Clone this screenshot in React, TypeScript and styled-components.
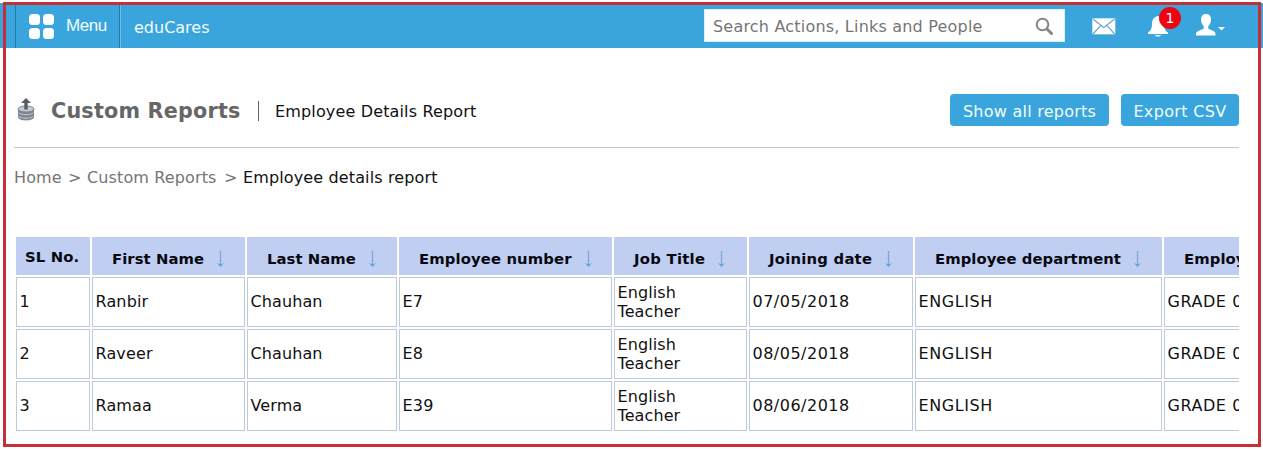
import React from "react";
import styled, { createGlobalStyle } from "styled-components";

const Global = createGlobalStyle`
  * { box-sizing: border-box; }
  body { margin: 0; background: #fff; color: #111; font: 16px/19px Verdana, "DejaVu Sans", sans-serif; overflow: hidden; }
`;
const Page = styled.div`position: relative; width: 1263px; height: 450px; padding-top: 3px; overflow: hidden; background: #fefefe;`;
const Frame = styled.div`position: absolute; left: 3px; top: 2px; width: 1258px; height: 445px; border: 3px solid #c62f38; pointer-events: none;`;
const Bar = styled.header`display: flex; height: 45px; background: #3aa5dc; color: #f2fcff; padding-left: 15px;`;
const MenuButton = styled.div`
  display: flex; align-items: center; width: 105px; padding: 1px 0 0 13px; gap: 12px;
  border-left: 1px solid #2379a8; border-right: 1px solid #2379a8;
  font: 17px/20px "Liberation Sans", Arial, sans-serif;
`;
const Brand = styled.div`padding: 15px 0 0 13px; width: 584px; border-left: 1px solid #6bbfe8;`;
const Search = styled.div`
  display: flex; align-items: center; justify-content: space-between; width: 361px; height: 33px; margin-top: 6px;
  padding: 1px 10px 0 8px; background: #fff; color: #757575; border: 1px solid #d8eef8;
`;
const Tools = styled.div`display: flex; align-items: flex-start; padding-left: 27px;`;
const Tool = styled.div<{ $w: number; $top: number }>`position: relative; width: ${p => p.$w}px; padding-top: ${p => p.$top}px; svg { display: block; }`;
const Badge = styled.span`
  position: absolute; left: 11px; top: 4px; width: 22px; height: 22px; border-radius: 50%; background: #f00410; color: #fff;
  font-size: 14px; line-height: 22px; text-align: center;
`;
const Content = styled.main`width: 1225px; margin-left: 14px;`;
const TitleRow = styled.div`display: flex; align-items: center; height: 100px; padding-top: 25px; border-bottom: 1px solid #c8c8c8;`;
const DatabaseMark = styled.span`display: flex; padding-left: 3px; width: 23px; margin-top: -1px;`;
const Title = styled.h1`margin: 1px 0 0 14px; width: 207px; color: #666; font-size: 20.7px; line-height: 26px; white-space: nowrap;`;
const Divider = styled.span`width: 1px; height: 20px; margin: 2px 15px 0 0; background: #666;`;
const Subtitle = styled.span`flex: 1; padding: 2px 0 0 1px;`;
const Button = styled.button<{ $w: number }>`
  width: ${p => p.$w}px; height: 32px; padding: 2px 0 0; margin-left: 12px; border: 0; border-radius: 4px; background: #3aa5dc;
  color: #f0fdff; font: inherit; white-space: nowrap;
`;
const Crumbs = styled.nav`display: flex; padding-top: 20px; height: 89px; color: #757575; white-space: nowrap;`;
const Crumb = styled.span<{ $w?: number; $current?: boolean }>`
  width: ${p => (p.$w ? p.$w + "px" : "auto")}; color: ${p => (p.$current ? "#111" : "inherit")}; letter-spacing: 0.13px;
`;
const Viewport = styled.div`overflow: hidden; padding-left: 2px;`;
const Table = styled.div`
  display: grid; width: 1390px; gap: 2px; grid-template-columns: 74px 153px 150px 213px 133px 164px 247px 240px;
  grid-template-rows: 38px repeat(3, 50px);
`;
const Head = styled.div<{ $first?: boolean }>`
  display: flex; align-items: center; gap: 12px; background: #bfcef1; color: #080810; font-weight: bold; font-size: 14.8px;
  white-space: nowrap; padding: ${p => (p.$first ? "1px 0 0 9px" : "5px 0 0 20px")};
`;
const Cell = styled.div`display: flex; align-items: center; border: 1px solid #bccbdc; padding: 0 0 1px 2.5px; background: #fff;`;
const Text = styled.span<{ $s?: number }>`letter-spacing: ${p => p.$s ?? 0}px; white-space: pre;`;

const Tiles = () => (
  <svg width="25" height="25" viewBox="0 0 25 25" fill="#fff">
    <rect x="0" y="0" width="11" height="11" rx="3.5" /><rect x="14" y="0" width="11" height="11" rx="3.5" />
    <rect x="0" y="14" width="11" height="11" rx="3.5" /><rect x="14" y="14" width="11" height="11" rx="3.5" />
  </svg>
);
const Magnifier = () => (
  <svg width="19" height="19" viewBox="0 0 19 19" fill="none" stroke="#858585">
    <circle cx="7.5" cy="7.5" r="5.8" strokeWidth="2" /><path d="M12.500 12.500l4 4" strokeWidth="3" strokeLinecap="round" />
  </svg>
);
const Mail = () => (
  <svg width="24" height="17" viewBox="0 0 24 17" stroke="#68a8cc" strokeWidth="1.2" fill="none">
    <rect x="0.3" y="0.3" width="23" height="16" fill="#fff" stroke="none" />
    <path d="M1 1l10.8 8.5L22.7 1M1 16l7.7-8.3M22.7 16L15 7.7" />
  </svg>
);
const Bell = () => (
  <svg width="20" height="21" viewBox="0 0 20 21" fill="#fff">
    <path d="M10 0C6 1 4 3.500 4 8c0 5-1.500 7-4 8.500V18h20v-1.500C17.500 15 16 13 16 8c0-4.500-2-7-6-8zM7 19h6c-.5 2-5.500 2-6 0z" />
  </svg>
);
const Person = () => (
  <svg width="30" height="22" viewBox="0 0 30 22" fill="#fff">
    <path d="M10 0C6.800 0 5 2 5 5.300c0 2.700.9 5.200 2.700 6.700v2.500C6.500 16 0 16.500 0 20v1.500h19.500V20c0-3.500-6-4-7.200-5.500V12C14.100 10.500 15 8 15 5.300 15 2 13.200 0 10 0z" />
    <path d="M22 13h7l-3.500 3.500z" />
  </svg>
);
const DatabaseUp = () => (
  <svg width="19" height="23" viewBox="0 0 19 23">
    <path d="M1 11v8c0 4.500 16 4.500 16 0v-8z" fill="#7e858f" />
    <ellipse cx="9" cy="11" rx="8" ry="3" fill="#c7cbd0" stroke="#7e858f" />
    <path d="M1.500 14.500c2 3 13 3 15 0M1.500 18c2 3 13 3 15 0" stroke="#c5cad1" fill="none" strokeWidth="1" />
    <path d="M9 0l5 5h-3.300v6.500H7.300V5H4z" fill="#555c66" />
  </svg>
);
const SortArrow = () => (
  <svg width="9" height="18" viewBox="0 0 9 18">
    <path d="M4.500 1v15" stroke="#75a9df" strokeWidth="1.300" /><path d="M1 13l3.500 1.500L8 13l-3.500 4z" fill="#659fd8" />
  </svg>
);

const columns: [string, number][] = [
  ["SL No.", 0.15], ["First Name", 0.08], ["Last Name", 0.08], ["Employee number", 0.13],
  ["Job Title", 0.28], ["Joining date", 0.24], ["Employee department", 0.06], ["Employee", 0.1],
];
const spacings = [0, 0.15, 0.1, 0.2, 0.1, 0.5, 0.6, 0.55];
const rows = [
  ["1", "Ranbir", "Chauhan", "E7", "English\nTeacher", "07/05/2018", "ENGLISH", "GRADE 0"],
  ["2", "Raveer", "Chauhan", "E8", "English\nTeacher", "08/05/2018", "ENGLISH", "GRADE 0"],
  ["3", "Ramaa", "Verma", "E39", "English\nTeacher", "08/06/2018", "ENGLISH", "GRADE 0"],
];

export default function App() {
  return (
    <Page>
      <Global />
      <Bar>
        <MenuButton><Tiles /><Text $s={-0.4}>Menu</Text></MenuButton>
        <Brand><Text>eduCares</Text></Brand>
        <Search><Text $s={0.2}>Search Actions, Links and People</Text><Magnifier /></Search>
        <Tools>
          <Tool $w={56} $top={15}><Mail /></Tool>
          <Tool $w={48} $top={13}><Bell /><Badge>1</Badge></Tool>
          <Tool $w={30} $top={11}><Person /></Tool>
        </Tools>
      </Bar>
      <Content>
        <TitleRow>
          <DatabaseMark><DatabaseUp /></DatabaseMark>
          <Title><Text $s={0.22}>Custom Reports</Text></Title>
          <Divider />
          <Subtitle><Text $s={0.15}>Employee Details Report</Text></Subtitle>
          <Button $w={159}><Text $s={0.25}>Show all reports</Text></Button>
          <Button $w={118}><Text $s={0.35}>Export CSV</Text></Button>
        </TitleRow>
        <Crumbs>
          <Crumb $w={54}>Home</Crumb><Crumb $w={19}>&gt;</Crumb>
          <Crumb $w={137}>Custom Reports</Crumb><Crumb $w={19}>&gt;</Crumb>
          <Crumb $current>Employee details report</Crumb>
        </Crumbs>
        <Viewport>
          <Table>
            {columns.map(([name, spacing], i) => (
              <Head key={name} $first={i === 0}><Text $s={spacing}>{name}</Text>{i > 0 && <SortArrow />}</Head>
            ))}
            {rows.map(row => row.map((value, i) => <Cell key={row[0] + "-" + i}><Text $s={spacings[i]}>{value}</Text></Cell>))}
          </Table>
        </Viewport>
      </Content>
      <Frame />
    </Page>
  );
}
